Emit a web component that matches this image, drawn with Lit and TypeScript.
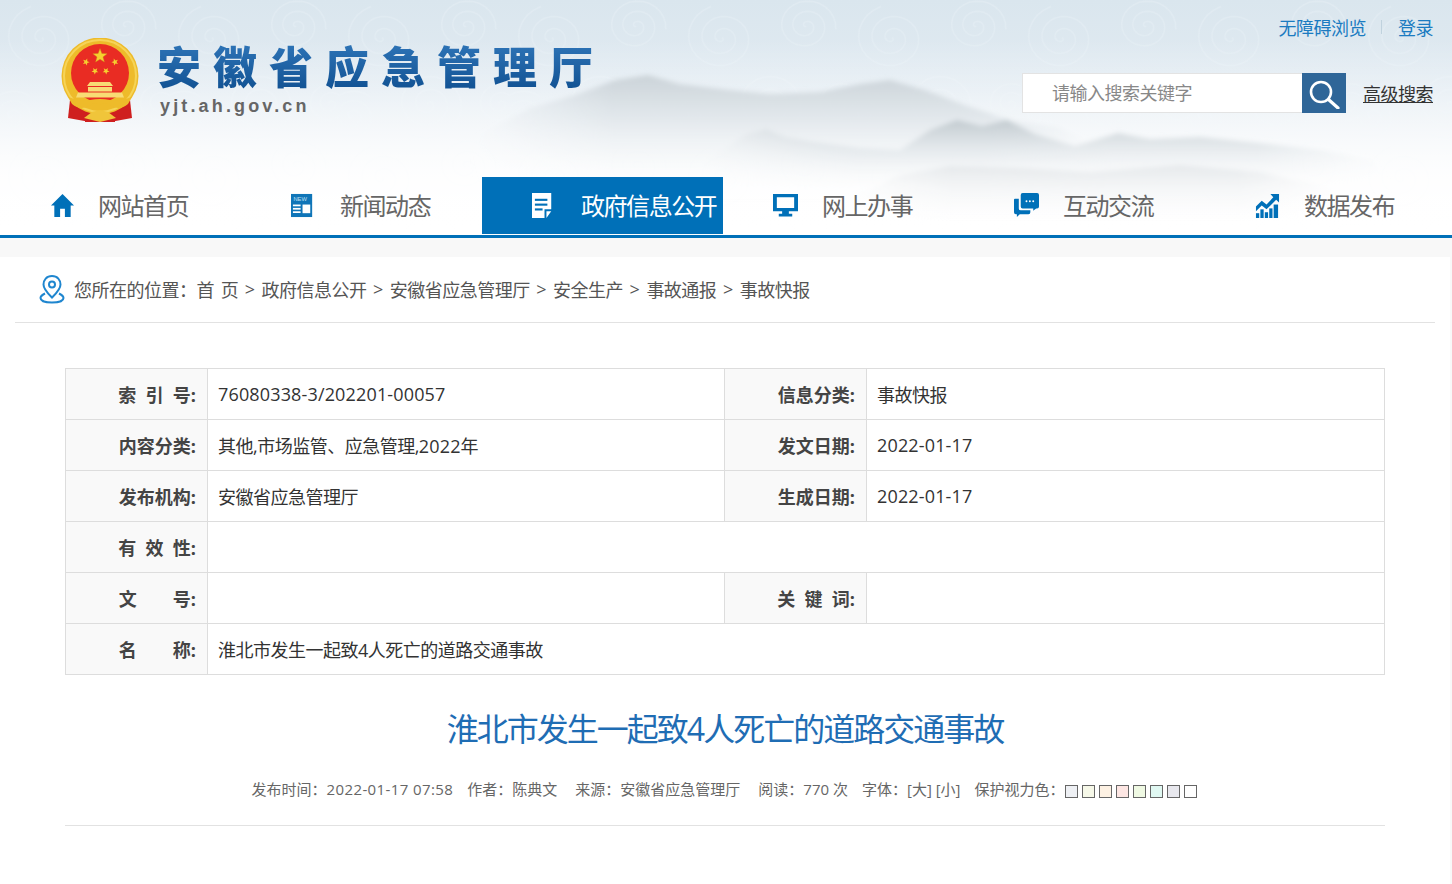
import { LitElement, css, html, svg } from 'lit';
import { customElement } from 'lit/decorators.js';

const spiral = (cx: number, cy: number, r: number, start: number) => {
  let d = '';
  const turns = 2.7;
  const steps = 70;
  for (let i = 0; i <= steps; i++) {
    const t = i / steps;
    const a = start + t * turns * Math.PI * 2;
    const rr = r * t;
    d += `${i ? 'L' : 'M'}${(cx + rr * Math.cos(a)).toFixed(1)} ${(cy + rr * 0.92 * Math.sin(a)).toFixed(1)}`;
  }
  return d;
};

const star = (cx: number, cy: number, r: number, rot = -90) => {
  const pts: string[] = [];
  for (let i = 0; i < 10; i++) {
    const rad = i % 2 ? r * 0.42 : r;
    const a = ((rot + i * 36) * Math.PI) / 180;
    pts.push(`${(cx + rad * Math.cos(a)).toFixed(2)},${(cy + rad * Math.sin(a)).toFixed(2)}`);
  }
  return pts.join(' ');
};

const headerArt = html`<svg class="art" viewBox="0 0 1452 235" preserveAspectRatio="none">
  <defs>
    <linearGradient id="sky" x1="0" y1="0" x2="0" y2="1">
      <stop offset="0" stop-color="#dae6ee" />
      <stop offset="0.4" stop-color="#e2ebf2" />
      <stop offset="0.62" stop-color="#edf2f6" />
      <stop offset="0.78" stop-color="#f8f9fb" />
      <stop offset="1" stop-color="#ffffff" />
    </linearGradient>
    <linearGradient id="fade" x1="0" y1="0" x2="0" y2="1">
      <stop offset="0" stop-color="#fff" stop-opacity="0" />
      <stop offset="0.7" stop-color="#fff" stop-opacity="0.85" />
      <stop offset="1" stop-color="#fff" stop-opacity="1" />
    </linearGradient>
    <linearGradient id="ink" x1="0" y1="0" x2="0" y2="1">
      <stop offset="0" stop-color="#c6ced3" stop-opacity="0.85" />
      <stop offset="0.35" stop-color="#d8dfe4" stop-opacity="0.6" />
      <stop offset="0.75" stop-color="#eef2f4" stop-opacity="0.15" />
      <stop offset="1" stop-color="#ffffff" stop-opacity="0" />
    </linearGradient>
    <linearGradient id="ink2" x1="0" y1="0" x2="0" y2="1">
      <stop offset="0" stop-color="#bcc5ca" stop-opacity="0.85" />
      <stop offset="0.45" stop-color="#dde3e7" stop-opacity="0.5" />
      <stop offset="1" stop-color="#ffffff" stop-opacity="0" />
    </linearGradient>
    <linearGradient id="ink3" x1="0" y1="0" x2="0" y2="1">
      <stop offset="0" stop-color="#dfe3e6" stop-opacity="0.7" />
      <stop offset="1" stop-color="#ffffff" stop-opacity="0" />
    </linearGradient>
    <linearGradient id="ends">
      <stop offset="0" stop-color="#000" />
      <stop offset="0.22" stop-color="#fff" />
      <stop offset="0.8" stop-color="#fff" />
      <stop offset="1" stop-color="#000" />
    </linearGradient>
    <mask id="endsMask" maskContentUnits="objectBoundingBox" x="-0.05" y="-0.05" width="1.1" height="1.1">
      <rect width="1" height="1" fill="url(#ends)" />
    </mask>
    <pattern id="swirl" width="170" height="140" patternUnits="userSpaceOnUse">
      <g fill="none" stroke="#e8f0f6" stroke-width="1.5" opacity="0.42">
        ${[
          [42, 38, 36, 0],
          [126, 26, 30, 2],
          [88, 104, 38, 4],
          [12, 116, 28, 1],
          [160, 104, 26, 3],
        ].map(([x, y, r, s]) => svg`<path d=${spiral(x, y, r, s)} />`)}
      </g>
    </pattern>
    <filter id="soft" x="-5%" y="-10%" width="110%" height="120%"><feGaussianBlur stdDeviation="2.4" /></filter>
  </defs>
  <rect width="1452" height="235" fill="url(#sky)" />
  <rect width="1452" height="235" fill="url(#swirl)" />
  <rect y="40" width="1452" height="195" fill="url(#fade)" />
  <g filter="url(#soft)">
    <path
      mask="url(#endsMask)"
      fill="url(#ink)"
      d="M470 140 L530 108 L575 95 L615 80 L648 75 L680 84 L730 90 L770 94 L820 92 L860 84 L890 80 L925 90 L965 105 L1010 120 L1060 128 L1115 155 L1115 200 L470 200 Z"
    />
    <path
      mask="url(#endsMask)"
      fill="url(#ink2)"
      d="M700 165 L745 135 L766 129 L785 137 L815 142 L860 148 L900 150 L930 130 L957 120 L982 126 L1007 120 L1035 134 L1075 146 L1118 133 L1150 139 L1200 137 L1260 143 L1320 150 L1373 160 L1400 195 L700 195 Z"
    />
    <path
      mask="url(#endsMask)"
      fill="url(#ink3)"
      d="M840 205 L900 175 L950 166 L1020 168 L1090 172 L1180 165 L1260 172 L1340 190 L1340 232 L840 232 Z"
    />
  </g>
</svg>`;

const emblem = html`<svg class="emblem" viewBox="60 38 80 84">
  <path fill="#cf1f1f" d="M70 100 L92 108 L90 122 L68 118 Z" />
  <path fill="#cf1f1f" d="M130 100 L108 108 L110 122 L132 118 Z" />
  <rect x="85" y="110" width="30" height="12" fill="#cf1f1f" />
  <circle cx="100" cy="76" r="38.5" fill="#eebb2a" />
  <circle cx="100" cy="76" r="36" fill="none" stroke="#f6d457" stroke-width="2" />
  <circle cx="100" cy="73" r="29" fill="#e92c23" />
  <polygon points=${star(100, 56, 7.5)} fill="#f6d02f" stroke="#c9871a" stroke-width="0.4" />
  <polygon points=${star(86, 62, 3.6, -70)} fill="#f6d02f" />
  <polygon points=${star(115, 62, 3.6, -110)} fill="#f6d02f" />
  <polygon points=${star(95, 71, 3.6, -50)} fill="#f6d02f" />
  <polygon points=${star(106, 71, 3.6, -130)} fill="#f6d02f" />
  <path fill="#f8dc74" d="M90 82 H110 L113 86 H87 Z" />
  <rect x="88" y="87" width="24" height="4.5" fill="#f8dc74" />
  <path fill="#f8dc74" d="M78 92.5 H122 L124 97.5 H76 Z" />
  <path
    fill="#eebb2a"
    d="M68 97 Q82 102 90 100 Q100 98 110 100 Q118 102 132 97 L128 104 Q120 111 111 106 Q105 101 100 105 Q95 101 89 106 Q80 111 72 104 Z"
  />
  <path fill="#f0c53a" d="M84 118 L92 112 L100 110 L108 112 L116 118 L108 120 L100 122 L92 120 Z" />
</svg>`;

const icons = {
  home: html`<svg class="ico" viewBox="0 0 26 26"><path fill="#0070b8" d="M13 1 L25 13 H21.5 V25 H15.5 V16.5 H10.5 V25 H4.5 V13 H1 Z" /></svg>`,
  news: html`<svg class="ico" viewBox="0 0 26 26">
    <rect x="0" y="1" width="22" height="24" fill="#0f75b8" />
    <text x="2.5" y="8" font-family="Liberation Sans" font-size="6" letter-spacing="0" fill="#bfe0f3">NEW</text>
    <rect x="2" y="12" width="8" height="1.8" fill="#fff" />
    <rect x="2" y="15.5" width="8" height="1.8" fill="#fff" />
    <rect x="2" y="19" width="8" height="1.8" fill="#fff" />
    <rect x="12" y="12" width="8" height="9" fill="#fff" />
  </svg>`,
  doc: html`<svg class="ico" viewBox="0 0 26 26">
    <path fill="#fff" d="M0 0 H20 V17 H13 V26 H0 Z" />
    <path fill="#fff" d="M15 19 H20 L15 26 Z" />
    <rect x="3" y="6" width="13" height="2.2" fill="#0070b8" />
    <rect x="3" y="11" width="13" height="2.2" fill="#0070b8" />
    <rect x="3" y="16" width="8" height="2.2" fill="#0070b8" />
  </svg>`,
  screen: html`<svg class="ico" viewBox="0 0 26 26">
    <path fill="#0070b8" fill-rule="evenodd" d="M0 1 H26 V19 H16.5 V21.5 H20 V24.5 H6 V21.5 H9.5 V19 H0 Z M4 4.5 V15.5 H22 V4.5 Z" />
  </svg>`,
  chat: html`<svg class="ico" viewBox="0 0 26 26">
    <path fill="#0070b8" d="M9 0 H24 Q26 0 26 2 V14 Q26 16 24 16 H23 L20 18.5 V16 H9 Q7 16 7 14 V2 Q7 0 9 0 Z" />
    <path fill="#0070b8" d="M1 6 H5 V16 Q5 18 7 18 H17 V20 Q17 22 15 22 H6 L3 25 V22 H2 Q0 22 0 20 V7 Q0 6 1 6 Z" />
    <circle cx="13" cy="8.5" r="1" fill="#fff" /><circle cx="16.5" cy="8.5" r="1" fill="#fff" /><circle cx="20" cy="8.5" r="1" fill="#fff" />
  </svg>`,
  chart: html`<svg class="ico" viewBox="0 0 26 26">
    <path fill="#0070b8" d="M1 14 L7 8 L12 12 L19 4.5 L16 1 H25 V10 L22 7 L12 17 L7 13 L1 19 Z" />
    <rect x="1" y="21" width="3.4" height="5" fill="#0070b8" />
    <rect x="5.6" y="17" width="3.4" height="9" fill="#0070b8" />
    <rect x="10.2" y="20" width="3.4" height="6" fill="#0070b8" />
    <rect x="14.8" y="16" width="3.4" height="10" fill="#0070b8" />
    <rect x="19.4" y="12" width="4.6" height="14" fill="#0070b8" />
  </svg>`,
};

const navItems = [
  { label: '网站首页', icon: icons.home },
  { label: '新闻动态', icon: icons.news },
  { label: '政府信息公开', icon: icons.doc, active: true },
  { label: '网上办事', icon: icons.screen },
  { label: '互动交流', icon: icons.chat },
  { label: '数据发布', icon: icons.chart },
];

const crumbs = ['首 页', '政府信息公开', '安徽省应急管理厅', '安全生产', '事故通报', '事故快报'];
const swatches = ['#eef0f4', '#f6f8e8', '#fdf1e3', '#fde6e3', '#eff9e3', '#e0f8f2', '#e8e8ee', '#ffffff'];

@customElement('app-root')
export class AppRoot extends LitElement {
  static override styles = css`
    :host {
      display: block;
      min-height: 884px;
      background: #f8f8f8;
      color: #333;
      font-family: 'Open Sans', 'Noto Sans CJK SC', sans-serif;
      font-size: 18px;
      letter-spacing: -0.5px;
    }
    a {
      color: inherit;
      text-decoration: none;
    }
    .header {
      position: relative;
      height: 235px;
      border-bottom: 3px solid #0070b8;
      background: #fff;
      overflow: hidden;
    }
    .art {
      position: absolute;
      inset: 0;
      width: 100%;
      height: 100%;
    }
    .top {
      position: relative;
      display: flex;
      justify-content: space-between;
      height: 177px;
      padding: 0 19px 0 60px;
      box-sizing: border-box;
    }
    .logo {
      display: flex;
      gap: 17px;
      padding-top: 38px;
    }
    .emblem {
      width: 80px;
      height: 84px;
    }
    .logo-title {
      margin-top: -2px;
      font-family: 'Noto Sans CJK SC', sans-serif;
      font-size: 44px;
      line-height: 58px;
      font-weight: 900;
      letter-spacing: 12px;
      white-space: nowrap;
      background: linear-gradient(#3279bc, #0f4f90);
      -webkit-background-clip: text;
      background-clip: text;
      color: transparent;
    }
    .logo-url {
      margin: 2px 0 0 3px;
      font-family: 'Liberation Sans', sans-serif;
      font-size: 18px;
      line-height: 20px;
      font-weight: 700;
      letter-spacing: 3.15px;
      color: #666;
    }
    .tools {
      display: flex;
      flex-direction: column;
      align-items: flex-end;
    }
    .links {
      display: flex;
      align-items: center;
      height: 20px;
      margin-top: 17px;
      color: #1b7bc1;
    }
    .links i {
      width: 1px;
      height: 14px;
      margin: 0 16px 0 15px;
      background: #c0d2de;
    }
    .search-row {
      display: flex;
      align-items: center;
      margin-top: 36px;
    }
    .search-row input {
      width: 280px;
      height: 40px;
      box-sizing: border-box;
      padding: 0 0 0 29px;
      border: 1px solid #e3e3e3;
      border-right: none;
      outline: none;
      background: #fff;
      font: inherit;
      letter-spacing: inherit;
      color: #333;
    }
    .search-row input::placeholder {
      color: #888;
      opacity: 1;
    }
    .search-btn {
      display: flex;
      align-items: center;
      justify-content: center;
      width: 44px;
      height: 40px;
      background: #2f6698;
    }
    .search-btn svg {
      width: 32px;
      height: 32px;
    }
    .advanced {
      margin-left: 17px;
      color: #333;
      text-decoration: underline;
    }
    .nav {
      position: relative;
      display: flex;
    }
    .nav-item {
      display: flex;
      align-items: center;
      width: 241px;
      height: 57px;
      padding-left: 50px;
      box-sizing: border-box;
      font-size: 24px;
      letter-spacing: -1.45px;
      color: #666;
      white-space: nowrap;
    }
    .nav-item.active {
      background: #0070b8;
      color: #fff;
    }
    .nav-item span {
      margin-bottom: 2px;
    }
    .ico {
      flex: none;
      width: 25px;
      height: 25px;
      margin-right: 24px;
    }
    .nav-item:first-child .ico {
      margin-right: 23px;
    }
    .main {
      width: 1450px;
      min-height: 627px;
      margin-top: 19px;
      padding: 0 15px;
      box-sizing: border-box;
      background: #fff;
    }
    .crumbs {
      display: flex;
      align-items: center;
      height: 66px;
      border-bottom: 1px solid #e2e2e2;
      padding-left: 24px;
      padding-bottom: 1px;
      box-sizing: border-box;
      color: #555;
      white-space: pre;
    }
    .crumbs svg {
      width: 26px;
      height: 30px;
      margin-right: 9px;
    }
    .crumbs a {
      word-spacing: 2.5px;
    }
    .crumbs span.sep {
      margin: 0 6.5px;
      letter-spacing: 0;
    }
    .content {
      padding: 45px 50px 0;
    }
    table {
      width: 1320px;
      border-collapse: collapse;
      table-layout: fixed;
    }
    th,
    td {
      height: 51px;
      padding: 0 10px;
      box-sizing: border-box;
      border: 1px solid #ddd;
      font-weight: 400;
      text-align: left;
      color: #333;
    }
    th {
      padding-right: 11px;
      background: #f9f9f9;
      font-weight: 700;
      text-align: right;
      letter-spacing: 0;
      color: #444;
      white-space: pre;
    }
    .num {
      letter-spacing: 0.15px;
    }
    .title {
      margin: 0;
      padding-top: 29px;
      font-size: 32px;
      line-height: 50px;
      font-weight: 400;
      text-align: center;
      letter-spacing: -2px;
      color: #1f6db4;
      white-space: nowrap;
    }
    .meta {
      display: flex;
      align-items: center;
      justify-content: center;
      height: 24px;
      margin-top: 22px;
      padding: 0 2px 25px 0;
      border-bottom: 1px solid #e2e2e2;
      font-size: 15px;
      letter-spacing: 0;
      color: #666;
      white-space: pre;
    }
    .meta .num {
      letter-spacing: 0.4px;
    }
    .sw {
      display: block;
      width: 11px;
      height: 11px;
      margin: 6px 4px 0 0;
      border: 1px solid #666;
    }
    .sw:last-child {
      margin-right: 0;
    }
    .m1 { margin-right: 14px; }
    .m2 { margin-right: 18px; }
  `;

  override render() {
    return html`
      <div class="header">
        ${headerArt}
        <div class="top">
          <div class="logo">
            ${emblem}
            <div>
              <div class="logo-title">安徽省应急管理厅</div>
              <div class="logo-url">yjt.ah.gov.cn</div>
            </div>
          </div>
          <div class="tools">
            <div class="links"><a>无障碍浏览</a><i></i><a>登录</a></div>
            <div class="search-row">
              <input placeholder="请输入搜索关键字" />
              <div class="search-btn">
                <svg viewBox="0 0 32 32" fill="none" stroke="#fff">
                  <circle cx="13" cy="15" r="10" stroke-width="2.6" />
                  <path d="M20.5 22.5 L30 31" stroke-width="3.2" stroke-linecap="round" />
                </svg>
              </div>
              <a class="advanced">高级搜索</a>
            </div>
          </div>
        </div>
        <div class="nav">
          ${navItems.map(
            (n) => html`<a class="nav-item ${n.active ? 'active' : ''}">${n.icon}<span>${n.label}</span></a>`,
          )}
        </div>
      </div>
      <div class="main">
        <div class="crumbs">
          <svg viewBox="0 0 26 30" fill="none" stroke="#1f86cf" stroke-width="2">
            <path d="M13 2 C7.5 2 4.5 6 4.5 10.5 C4.5 15.5 10 20.5 13 23.5 C16 20.5 21.5 15.5 21.5 10.5 C21.5 6 18.5 2 13 2 Z" />
            <circle cx="13" cy="10.5" r="3" />
            <path d="M6 19.5 C3 21 1.5 22.5 1.5 24 C1.5 27 7 28.5 13 28.5 C19 28.5 24.5 27 24.5 24 C24.5 22.5 23 21 20 19.5" />
          </svg>
          <span>您所在的位置：</span>${crumbs.map(
            (c, i) => html`${i ? html`<span class="sep">&gt;</span>` : ''}<a>${c}</a>`,
          )}
        </div>
        <div class="content">
          <table>
            <colgroup>
              <col style="width:142px" />
              <col style="width:517px" />
              <col style="width:142px" />
              <col />
            </colgroup>
            <tr>
              <th>索  引  号:</th>
              <td class="num">76080338-3/202201-00057</td>
              <th>信息分类:</th>
              <td>事故快报</td>
            </tr>
            <tr>
              <th>内容分类:</th>
              <td>其他,市场监管、应急管理,<span class="num">2022</span>年</td>
              <th>发文日期:</th>
              <td class="num">2022-01-17</td>
            </tr>
            <tr>
              <th>发布机构:</th>
              <td>安徽省应急管理厅</td>
              <th>生成日期:</th>
              <td class="num">2022-01-17</td>
            </tr>
            <tr>
              <th>有  效  性:</th>
              <td colspan="3"></td>
            </tr>
            <tr>
              <th>文　　号:</th>
              <td></td>
              <th>关  键  词:</th>
              <td></td>
            </tr>
            <tr>
              <th>名　　称:</th>
              <td colspan="3">淮北市发生一起致4人死亡的道路交通事故</td>
            </tr>
          </table>
          <h1 class="title">淮北市发生一起致4人死亡的道路交通事故</h1>
          <div class="meta">
            <span class="m1">发布时间：<span class="num">2022-01-17 07:58</span></span>
            <span class="m2">作者：陈典文</span>
            <span class="m2">来源：安徽省应急管理厅</span>
            <span class="m1">阅读：770 次</span>
            <span class="m1">字体：[大] [小]</span>
            <span>保护视力色：</span>
            ${swatches.map((c) => html`<span class="sw" style="background:${c}"></span>`)}
          </div>
        </div>
      </div>
    `;
  }
}

declare global {
  interface HTMLElementTagNameMap {
    'app-root': AppRoot;
  }
}
